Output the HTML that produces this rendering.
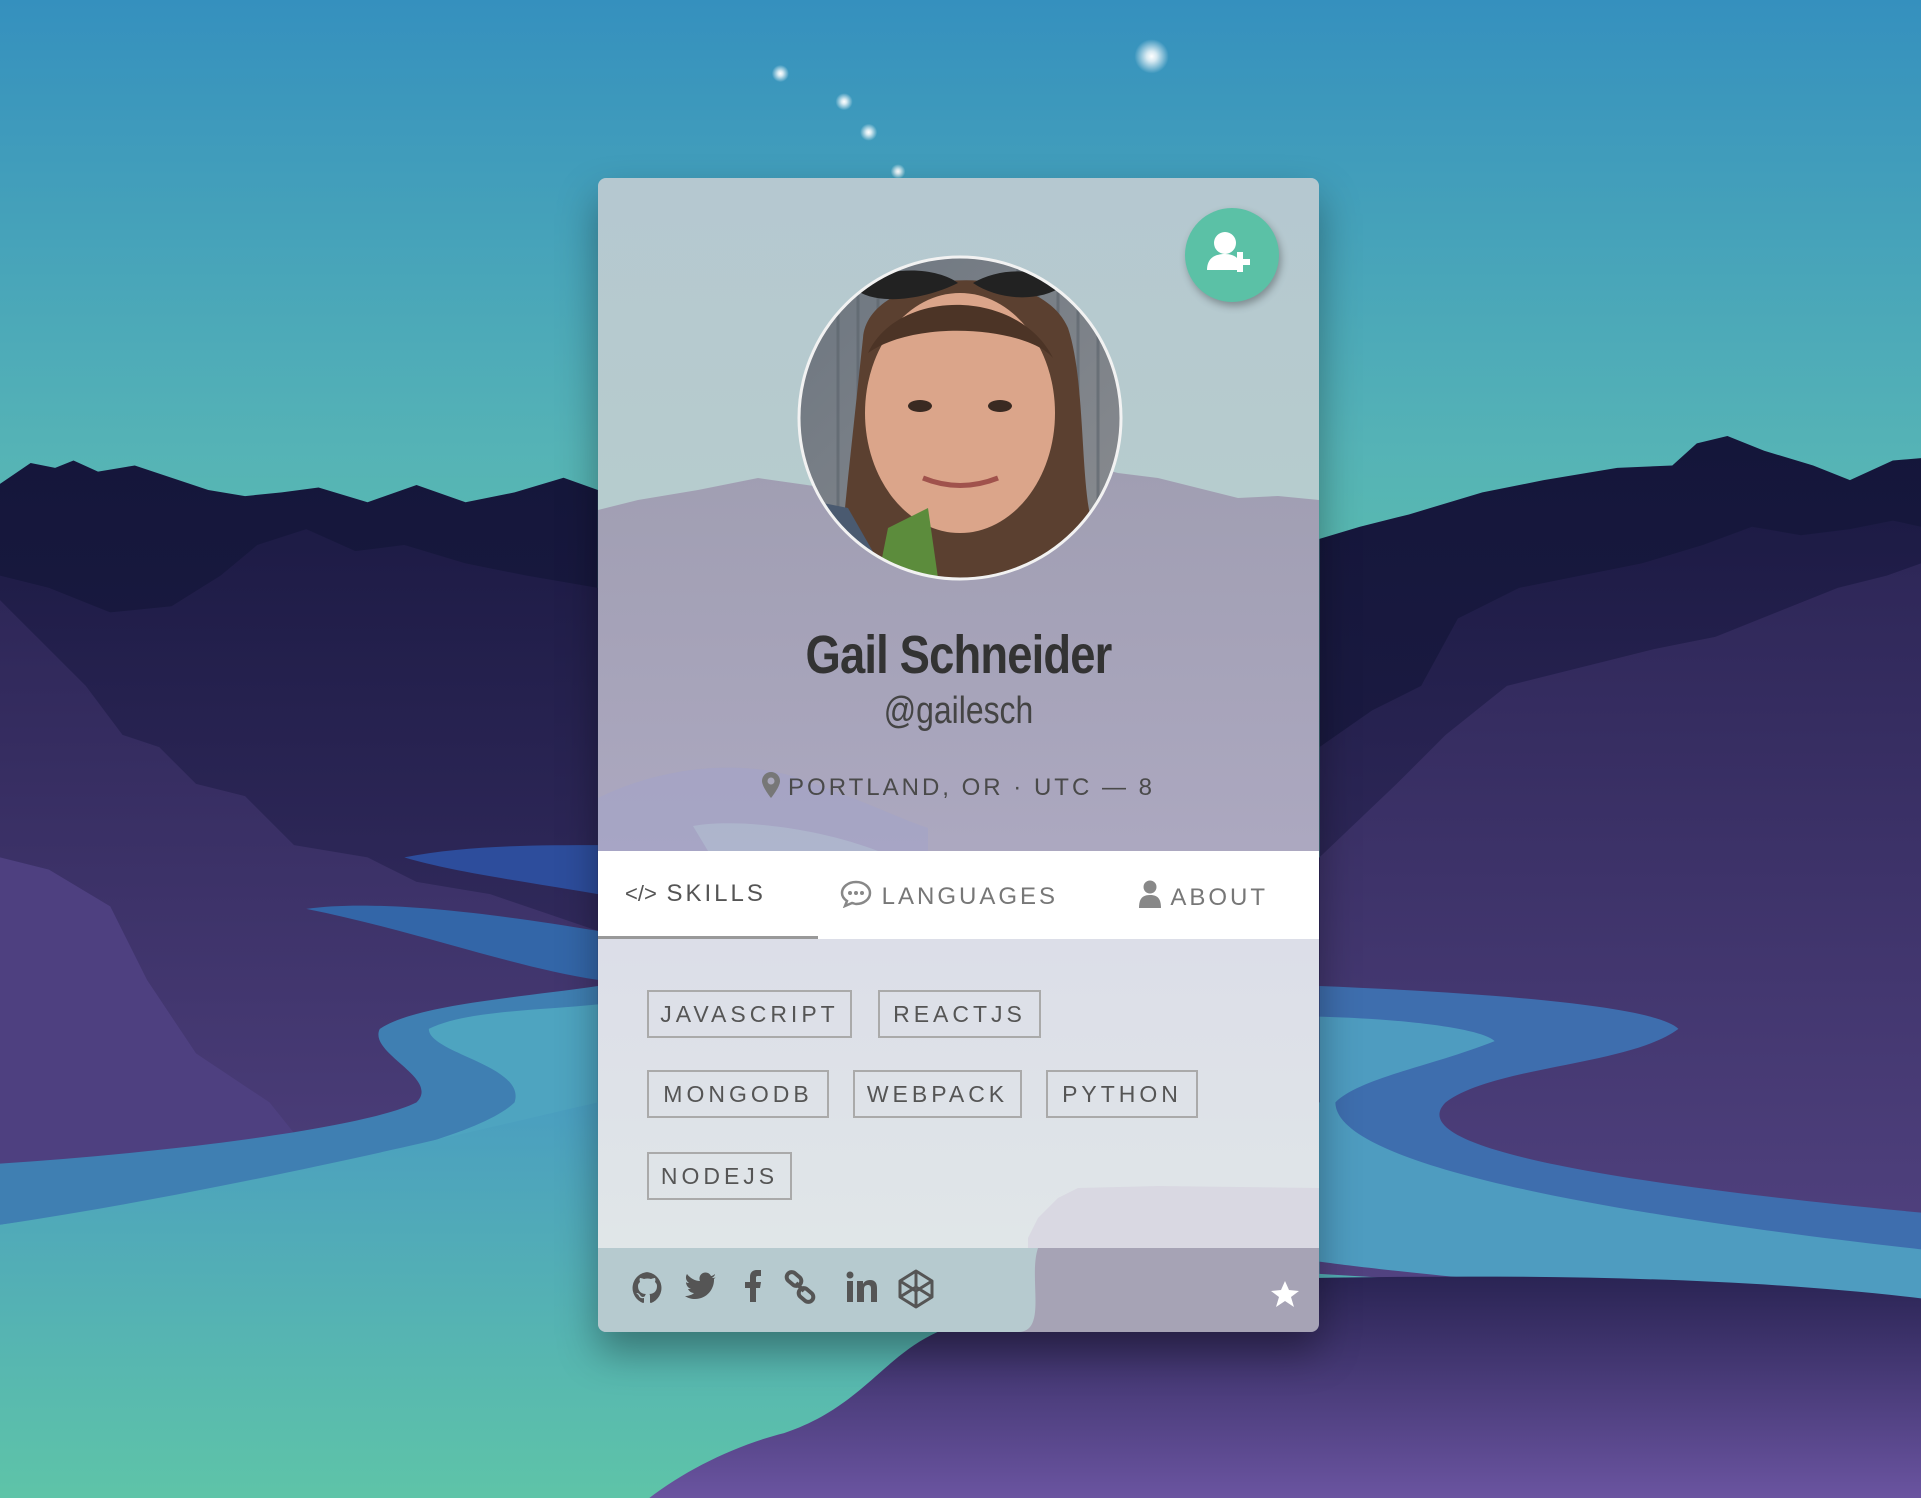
<!DOCTYPE html>
<html><head><meta charset="utf-8"><style>
*{margin:0;padding:0;box-sizing:border-box}
body{width:1921px;height:1498px;overflow:hidden;position:relative;font-family:"Liberation Sans",sans-serif;background:#3b93bd}
#bg{position:absolute;left:0;top:0;width:1921px;height:1498px}
.card{position:absolute;left:598px;top:178px;width:721px;height:1154px;border-radius:8px;overflow:hidden;box-shadow:0 20px 40px rgba(0,0,0,.35)}
.abs{position:absolute}
.name{position:absolute;left:0;width:721px;text-align:center;top:446px;font-size:54px;font-weight:bold;color:#333;letter-spacing:-1px;transform:scaleX(.84)}
.handle{position:absolute;left:0;width:721px;text-align:center;top:512px;font-size:38px;color:#444;transform:scaleX(.84)}
.loc{position:absolute;left:0;width:721px;text-align:center;top:594px;font-size:24px;color:#4a4a4a;letter-spacing:3px}
.tabs{position:absolute;left:0;top:673px;width:721px;height:88px;background:#fff}
.tab{position:absolute;top:29px;font-size:24px;letter-spacing:3px;color:#777}
.tag{position:absolute;height:48px;border:2px solid #aaa;color:#555;font-size:23px;letter-spacing:4px;text-align:center;line-height:44px}
</style></head><body>
<svg id="bg" viewBox="0 0 1568 1223" preserveAspectRatio="none">
<defs>
<linearGradient id="sky" x1="0" y1="0" x2="0" y2="1"><stop offset="0" stop-color="#3590be"/><stop offset=".3" stop-color="#55b3b6"/><stop offset=".45" stop-color="#5cc0aa"/></linearGradient>
<linearGradient id="m1" x1="0" y1="0" x2="0" y2="1"><stop offset="0" stop-color="#14163a"/><stop offset="1" stop-color="#2a2352"/></linearGradient>
<linearGradient id="m2" x1="0" y1="0" x2="0" y2="1"><stop offset="0" stop-color="#1d1b45"/><stop offset="1" stop-color="#4a3c78"/></linearGradient>
<linearGradient id="m3" x1="0" y1="0" x2="0" y2="1"><stop offset="0" stop-color="#2e2758"/><stop offset="1" stop-color="#5c4a8c"/></linearGradient>
<linearGradient id="gr" x1="0" y1="0" x2="0" y2="1"><stop offset="0" stop-color="#4a9ec0"/><stop offset="1" stop-color="#5ec4a8"/></linearGradient>
<linearGradient id="hill" x1="0" y1="0" x2="0" y2="1"><stop offset="0" stop-color="#2a2454"/><stop offset="1" stop-color="#6a54a0"/></linearGradient>
<radialGradient id="st"><stop offset="0" stop-color="#fff"/><stop offset=".3" stop-color="#fff" stop-opacity=".8"/><stop offset="1" stop-color="#fff" stop-opacity="0"/></radialGradient>
</defs>
<rect width="1568" height="1223" fill="url(#sky)"/>
<circle cx="940" cy="46" r="14" fill="url(#st)"/><circle cx="637" cy="60" r="7" fill="url(#st)"/><circle cx="689" cy="83" r="7" fill="url(#st)"/><circle cx="709" cy="108" r="7" fill="url(#st)"/><circle cx="733" cy="140" r="6" fill="url(#st)"/>
<path fill="url(#m1)" d="M0 395L25 378L45 382L60 376L80 385L110 380L140 390L170 400L200 405L230 402L260 398L300 410L340 396L380 410L420 402L460 390L488 400L488 700L1077 700L1077 440L1110 430L1150 420L1210 402L1260 392L1320 382L1365 380L1385 362L1410 356L1440 368L1480 380L1510 392L1545 376L1568 374L1568 1223L0 1223Z"/>
<path fill="url(#m2)" d="M0 470L40 480L90 500L140 495L180 470L210 445L250 432L290 450L330 445L380 460L430 470L488 480L488 800L1077 800L1077 610L1120 580L1160 560L1190 505L1240 480L1290 470L1340 460L1390 445L1430 430L1470 437L1510 432L1545 425L1568 430L1568 1223L0 1223Z"/>
<path fill="url(#m3)" d="M0 490L30 520L70 560L100 600L130 610L160 640L200 650L240 690L300 700L340 720L400 730L488 760L488 1223L0 1223Z"/>
<path fill="url(#m3)" d="M1077 700L1140 640L1180 600L1230 560L1290 545L1350 530L1400 520L1450 500L1500 480L1540 470L1568 460L1568 1223L1077 1223Z"/>
<path fill="#4e4080" d="M0 700L40 710L90 740L120 800L160 860L220 900L260 950L0 960Z"/>
<path fill="#3366a8" d="M250 742C300 735 380 742 488 760L488 800C420 790 340 760 250 742Z"/>
<path fill="#2d4d9c" d="M330 700C380 690 440 690 488 690L488 730C430 720 370 712 330 700Z"/>
<path fill="#3f7fb2" d="M0 950C150 940 300 920 340 900C360 880 300 860 310 840C340 820 420 815 488 805L488 1030C300 1060 120 1080 0 1100Z"/>
<path fill="#4ea4c0" d="M0 1000C150 980 380 940 420 900C430 870 350 860 350 840C380 825 440 825 488 820L488 1223L0 1223Z"/>
<path fill="#3e6eae" d="M1077 805C1200 810 1350 820 1370 840C1330 870 1220 870 1180 900C1150 930 1250 960 1568 990L1568 1060C1350 1040 1150 1020 1077 1000Z"/>
<path fill="#4e9cc0" d="M1077 830C1150 832 1210 840 1220 850C1170 870 1110 880 1090 900C1090 950 1300 990 1568 1020L1568 1070C1350 1060 1150 1040 1077 1030Z"/>
<path fill="url(#gr)" d="M0 1000C200 970 400 920 488 900L1077 900L1077 1040L1568 1070L1568 1223L0 1223Z"/>
<path fill="url(#hill)" d="M530 1223C560 1200 600 1180 640 1170C700 1150 720 1110 760 1090C820 1060 900 1050 1000 1045C1200 1040 1400 1040 1568 1060L1568 1223Z"/>
</svg>

<div class="card">
<svg class="abs" style="left:0;top:0" width="721" height="1154" viewBox="0 0 721 1154">
<defs><linearGradient id="ct" x1="0" y1="0" x2="0" y2="1"><stop offset="0" stop-color="#b5c8d0"/><stop offset="1" stop-color="#b8d0cb"/></linearGradient>
<linearGradient id="cm" x1="0" y1="0" x2="0" y2="1"><stop offset="0" stop-color="#a09eb2"/><stop offset="1" stop-color="#aca8c0"/></linearGradient>
<linearGradient id="cs" x1="0" y1="0" x2="0" y2="1"><stop offset="0" stop-color="#dcdee8"/><stop offset="1" stop-color="#e0e6e8"/></linearGradient>
<clipPath id="av"><circle cx="362" cy="240" r="160"/></clipPath>
<linearGradient id="face" x1="0" y1="0" x2="1" y2="1"><stop offset="0" stop-color="#6d7680"/><stop offset="1" stop-color="#8a8c90"/></linearGradient></defs>
<rect width="721" height="673" fill="url(#ct)"/>
<path fill="url(#cm)" d="M0 332L40 322L100 312L160 300L230 310L300 290L360 300L420 296L480 285L520 295L560 300L600 310L640 320L680 318L721 322L721 673L0 673Z"/>
<path fill="#a3a3c8" opacity=".6" d="M0 620C60 590 140 580 200 600C260 620 300 640 330 650L330 673L0 673Z"/>
<path fill="#b0bcd0" opacity=".7" d="M95 648C140 640 220 650 280 673L110 673Z"/>
<rect y="761" width="721" height="310" fill="url(#cs)"/>
<path fill="#d7d4e0" opacity=".8" d="M430 1060L440 1040L460 1020L480 1010L560 1008L721 1010L721 1071L430 1071Z"/>
<rect y="1070" width="721" height="84" fill="#a6a3b5"/>
<path fill="#b6cacf" d="M0 1070L440 1070C430 1100 450 1154 420 1154L0 1154Z"/>
<g clip-path="url(#av)">
<rect x="200" y="78" width="330" height="330" fill="url(#face)"/>
<g stroke="#5a636c" stroke-width="3" opacity=".6"><path d="M240 80V400M260 80V400M280 80V400M300 80V400M420 80V400M440 80V400M460 80V400M480 80V400M500 80V400"/></g>
<path fill="#5b4030" d="M265 160C270 90 440 80 470 150C490 210 480 330 500 360L470 400L240 400L250 300Z"/>
<ellipse cx="362" cy="235" rx="95" ry="120" fill="#dba58a"/>
<path fill="#4c3426" d="M270 175C300 110 420 110 455 180C430 150 320 140 270 175Z"/>
<path fill="#222" d="M255 110C290 85 340 90 360 105C330 120 280 130 255 110ZM375 105C400 90 440 88 465 108C440 125 400 122 375 105Z"/>
<ellipse cx="322" cy="228" rx="12" ry="6" fill="#3a2a22"/><ellipse cx="402" cy="228" rx="12" ry="6" fill="#3a2a22"/>
<path d="M325 300Q362 315 400 300" stroke="#a0524c" stroke-width="5" fill="none"/>
<path fill="#5c8c3c" d="M290 350L330 330L340 400L280 400Z"/>
<path fill="#4a5a70" d="M200 320L250 330L290 400L200 400Z"/>
</g>
<circle cx="362" cy="240" r="161" fill="none" stroke="#f2f2f2" stroke-width="3"/>
</svg>
<div class="abs" style="left:587px;top:30px;width:94px;height:94px;border-radius:50%;background:#5bc1a6;box-shadow:2px 4px 8px rgba(0,0,0,.3)">
<svg width="94" height="94" viewBox="0 0 94 94"><circle cx="40" cy="35" r="11" fill="#fff"/><path d="M22 62C22 50 30 46 40 46C46 46 50 48 52 50V62Z" fill="#fff"/><path d="M55 44V64M45 54H65" stroke="#fff" stroke-width="6"/></svg></div>
<div class="name">Gail Schneider</div>
<div class="handle">@gailesch</div>
<div class="loc"><svg width="18" height="26" viewBox="0 0 18 26" style="vertical-align:-3px;margin-right:8px"><path d="M9 0C4 0 0 4 0 9C0 15 9 26 9 26C9 26 18 15 18 9C18 4 14 0 9 0Z" fill="#777"/><circle cx="9" cy="9" r="3.5" fill="#aaa8bc"/></svg>PORTLAND, OR · UTC — 8</div>
<div class="tabs">
<div class="tab" style="left:27px;color:#555"><span style="letter-spacing:0;font-size:22px">&lt;/&gt;</span> SKILLS</div>
<div class="tab" style="left:242px"><svg width="32" height="28" viewBox="0 0 32 28" style="vertical-align:-4px"><path d="M16 2C8 2 2 7 2 13C2 16 4 19 7 21L5 26L12 23C13 23 15 24 16 24C24 24 30 19 30 13C30 7 24 2 16 2Z" fill="none" stroke="#888" stroke-width="2.5"/><circle cx="10" cy="13" r="2" fill="#888"/><circle cx="16" cy="13" r="2" fill="#888"/><circle cx="22" cy="13" r="2" fill="#888"/></svg> LANGUAGES</div>
<div class="tab" style="left:540px"><svg width="24" height="28" viewBox="0 0 24 28" style="vertical-align:-3px"><circle cx="12" cy="7" r="6.5" fill="#888"/><path d="M1 28C1 18 5 15 12 15C19 15 23 18 23 28Z" fill="#888"/></svg> ABOUT</div>
<div class="abs" style="left:0;top:85px;width:220px;height:3px;background:#999"></div>
</div>
<div class="tag" style="left:49px;top:812px;width:205px">JAVASCRIPT</div>
<div class="tag" style="left:280px;top:812px;width:163px">REACTJS</div>
<div class="tag" style="left:49px;top:892px;width:182px">MONGODB</div>
<div class="tag" style="left:255px;top:892px;width:169px">WEBPACK</div>
<div class="tag" style="left:448px;top:892px;width:152px">PYTHON</div>
<div class="tag" style="left:49px;top:974px;width:145px">NODEJS</div>
<svg class="abs" style="left:0;top:1090px" width="721" height="64" viewBox="0 0 721 64">
<g fill="#555">
<path d="M50 4a16 16 0 0 0-5 31c1 0 1-1 1-1v-4c-4 1-5-2-5-2-1-2-2-2-2-2-1-1 0-1 0-1 2 0 3 2 3 2 2 3 4 2 5 1 0-1 1-2 1-2-4 0-8-2-8-8 0-2 1-3 2-4 0-1-1-2 0-4 0 0 1 0 4 1a13 13 0 0 1 7 0c3-1 4-1 4-1 1 2 0 3 0 4 1 1 2 2 2 4 0 6-4 8-8 8 1 0 1 1 1 3v5s0 1 1 1a16 16 0 0 0-5-31z"/>
<path d="M118 9c-1 1-3 1-4 1 1-1 3-2 3-4-1 1-3 2-4 2a6 6 0 0 0-11 5c-5 0-10-3-13-7-2 3-1 7 2 9-1 0-2 0-3-1 0 3 2 6 5 7h-3c1 2 3 4 6 4-2 2-6 3-9 3 3 2 6 3 10 3 12 0 19-10 19-19v-1c1-1 2-2 2-2z"/>
<path d="M152 34V20h-5v-6h5V9c0-5 3-7 7-7h4v6h-3c-2 0-2 1-2 2v4h5l-1 6h-4v14z"/>
<rect x="249" y="13" width="6" height="21"/><circle cx="252" cy="7" r="3.5"/><path d="M259 13h6v3c1-2 3-4 7-4 5 0 7 3 7 8v14h-6V21c0-3-1-4-3-4s-4 1-4 4v13h-7z"/>
</g>
<g fill="none" stroke="#555" stroke-width="4"><rect x="188" y="6" width="16" height="10" rx="5" transform="rotate(40 196 11)"/><rect x="200" y="22" width="16" height="10" rx="5" transform="rotate(40 208 27)"/><path d="M198 15L206 23"/></g>
<g fill="none" stroke="#555" stroke-width="3" stroke-linejoin="round"><path d="M318 3L334 13V29L318 39L302 29V13ZM302 13L318 23L334 13M318 39V23M302 29L318 19L334 29M318 3V19"/></g>
<path fill="#fff" d="M687 13l4 9 10 1-8 6 3 10-9-6-9 6 3-10-8-6 10-1z"/>
</svg>
</div>
</body></html>
